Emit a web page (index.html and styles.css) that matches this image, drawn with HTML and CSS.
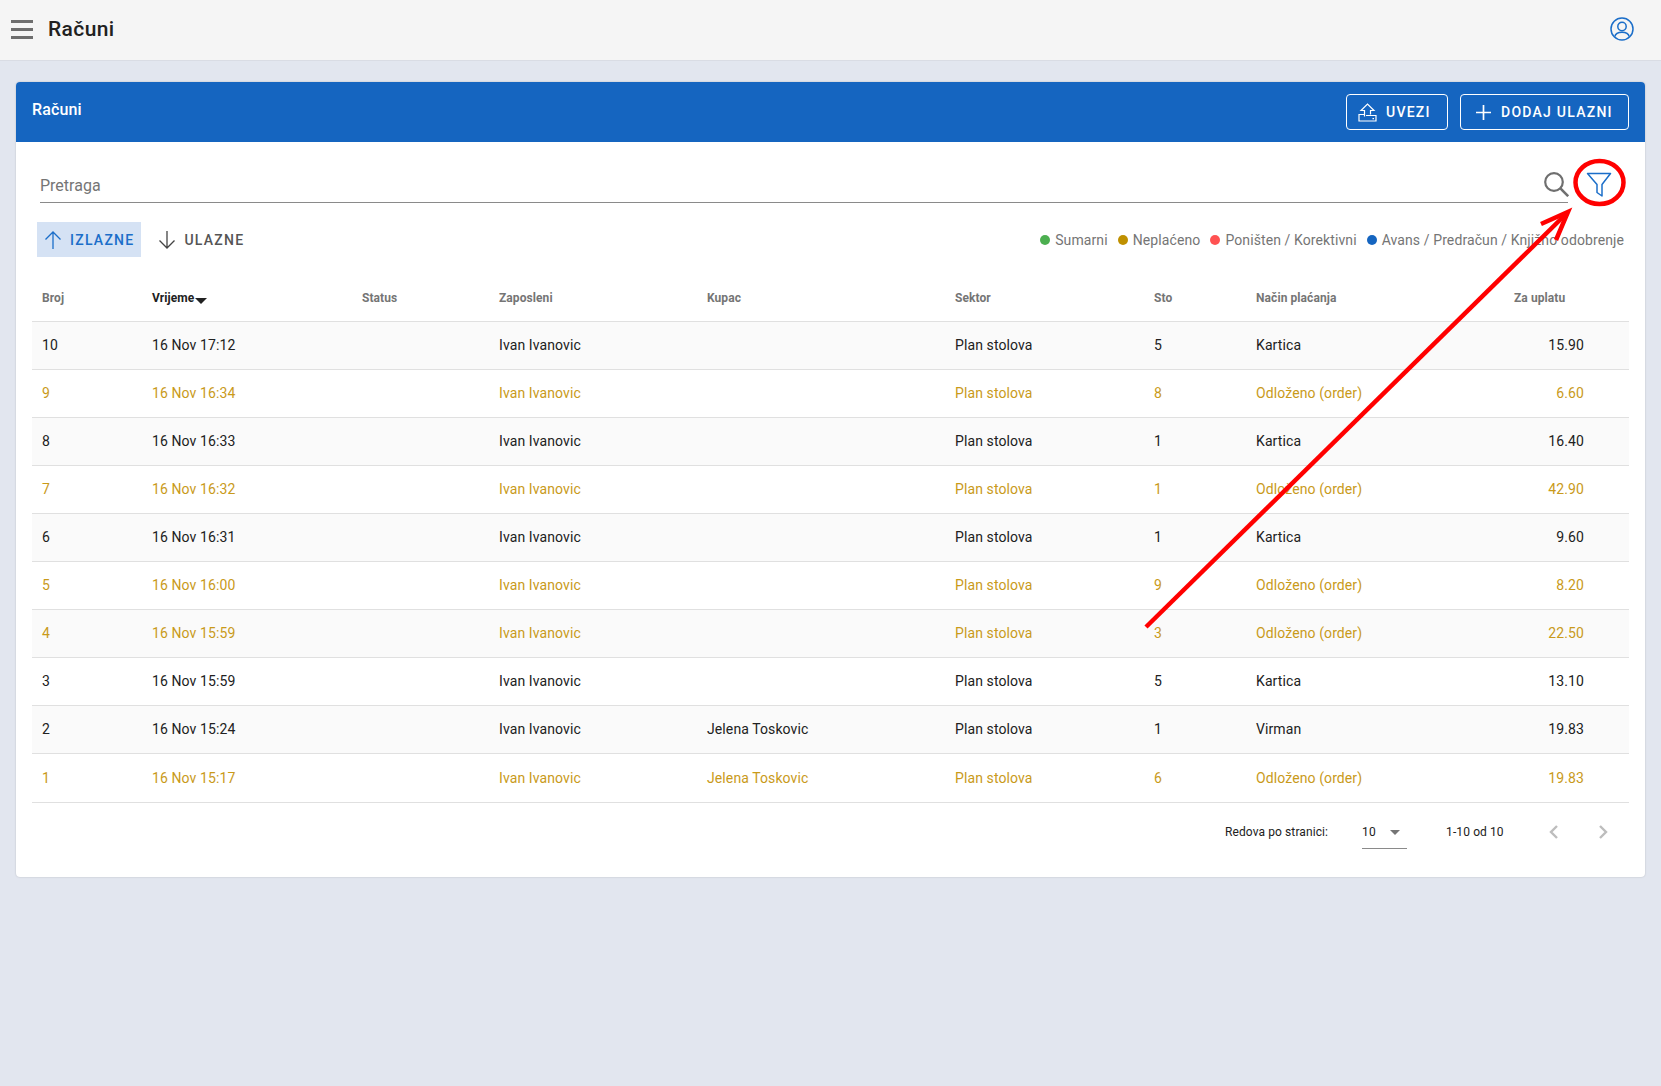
FILE: index.html
```html
<!DOCTYPE html>
<html lang="en">
<head>
    <meta charset="UTF-8">
    <title>Računi</title>
    <link rel="stylesheet" href="styles.css">
</head>
<body>
    <header class="topbar">
        <svg class="menu-icon" width="22" height="19" viewBox="0 0 22 19"><path d="M0 1.500h22M0 9.500h22M0 17.500h22" stroke="#6e6e6e" stroke-width="2.800" fill="none"/></svg>
        <h1 class="topbar-title">Računi</h1>
        <svg class="user-icon" width="24" height="24" viewBox="0 0 24 24" fill="none" stroke="#1b6ec9" stroke-width="1.5"><circle cx="12" cy="12" r="11"/><circle cx="12" cy="9.5" r="4.2"/><path d="M4.8 19.6c.6-3 3.6-4.4 7.2-4.4s6.600 1.400 7.200 4.400"/></svg>
    </header>

    <main class="page">
        <section class="card">
            <div class="card-head">
                <h2 class="card-title">Računi</h2>
                <div class="card-actions">
                    <button class="btn-outline btn-import">
                        <svg width="19" height="19" viewBox="0 0 19 19" fill="none" stroke="#fff" stroke-width="1.200"><path d="M6.500 13.500V7.500H3L9.500 1 16 7.500h-3.500v4"/><path d="M6.500 11.500H1v6.500h17v-5.500H8"/><path d="M14.500 15.700h1.500"/></svg>
                        UVEZI
                    </button>
                    <button class="btn-outline btn-add">
                        <svg width="15" height="15" viewBox="0 0 15 15" fill="none" stroke="#fff" stroke-width="1.700"><path d="M7.500 0v15M0 7.500h15"/></svg>
                        DODAJ ULAZNI
                    </button>
                </div>
            </div>

            <div class="card-body">
                <div class="search-row">
                    <div class="search-field">
                        <span class="search-label">Pretraga</span>
                        <svg width="25" height="25" viewBox="0 0 25 25" fill="none" stroke="#6f6f6f" stroke-width="2.200"><circle cx="10" cy="10" r="8.800"/><path d="M16.400 16.400l7.800 7.800" stroke-width="2.600"/></svg>
                    </div>
                    <svg class="filter-icon" width="26" height="26" viewBox="0 0 26 26" fill="none" stroke="#1b6ec9" stroke-width="1.500"><path d="M1.500 1.500h23L16 12.500v11.500l-5-3.500v-8z" stroke-linejoin="round"/></svg>
                </div>

                <div class="filter-row">
                    <div class="tabs">
                        <button class="tab tab-active">
                            <svg width="18" height="18" viewBox="0 0 18 18" fill="none" stroke="#1b6ec9" stroke-width="1.300"><path d="M9 18V1M1.500 8.500L9 1l7.500 7.500"/></svg>
                            IZLAZNE
                        </button>
                        <button class="tab">
                            <svg width="18" height="18" viewBox="0 0 18 18" fill="none" stroke="#444" stroke-width="1.300"><path d="M9 0v17M1.500 9.500L9 17l7.500-7.500"/></svg>
                            ULAZNE
                        </button>
                    </div>
                    <ul class="legend">
                        <li><span class="dot dot-green"></span>Sumarni</li>
                        <li><span class="dot dot-amber"></span>Neplaćeno</li>
                        <li><span class="dot dot-red"></span>Poništen / Korektivni</li>
                        <li><span class="dot dot-blue"></span>Avans / Predračun / Knjižno odobrenje</li>
                    </ul>
                </div>

                <table class="bills">
                    <colgroup>
                        <col class="c-broj"><col class="c-time"><col class="c-status"><col class="c-emp"><col class="c-buyer"><col class="c-sector"><col class="c-table"><col class="c-pay"><col class="c-sum">
                    </colgroup>
                    <thead>
                        <tr>
                            <th>Broj</th>
                            <th class="sorted">Vrijeme<span class="sort-caret"></span></th>
                            <th>Status</th>
                            <th>Zaposleni</th>
                            <th>Kupac</th>
                            <th>Sektor</th>
                            <th>Sto</th>
                            <th>Način plaćanja</th>
                            <th>Za uplatu</th>
                        </tr>
                    </thead>
                    <tbody>
                        <tr><td>10</td><td>16 Nov 17:12</td><td></td><td>Ivan Ivanovic</td><td></td><td>Plan stolova</td><td>5</td><td>Kartica</td><td class="sum">15.90</td></tr>
                        <tr class="unpaid"><td>9</td><td>16 Nov 16:34</td><td></td><td>Ivan Ivanovic</td><td></td><td>Plan stolova</td><td>8</td><td>Odloženo (order)</td><td class="sum">6.60</td></tr>
                        <tr><td>8</td><td>16 Nov 16:33</td><td></td><td>Ivan Ivanovic</td><td></td><td>Plan stolova</td><td>1</td><td>Kartica</td><td class="sum">16.40</td></tr>
                        <tr class="unpaid"><td>7</td><td>16 Nov 16:32</td><td></td><td>Ivan Ivanovic</td><td></td><td>Plan stolova</td><td>1</td><td>Odloženo (order)</td><td class="sum">42.90</td></tr>
                        <tr><td>6</td><td>16 Nov 16:31</td><td></td><td>Ivan Ivanovic</td><td></td><td>Plan stolova</td><td>1</td><td>Kartica</td><td class="sum">9.60</td></tr>
                        <tr class="unpaid"><td>5</td><td>16 Nov 16:00</td><td></td><td>Ivan Ivanovic</td><td></td><td>Plan stolova</td><td>9</td><td>Odloženo (order)</td><td class="sum">8.20</td></tr>
                        <tr class="unpaid"><td>4</td><td>16 Nov 15:59</td><td></td><td>Ivan Ivanovic</td><td></td><td>Plan stolova</td><td>3</td><td>Odloženo (order)</td><td class="sum">22.50</td></tr>
                        <tr><td>3</td><td>16 Nov 15:59</td><td></td><td>Ivan Ivanovic</td><td></td><td>Plan stolova</td><td>5</td><td>Kartica</td><td class="sum">13.10</td></tr>
                        <tr><td>2</td><td>16 Nov 15:24</td><td></td><td>Ivan Ivanovic</td><td>Jelena Toskovic</td><td>Plan stolova</td><td>1</td><td>Virman</td><td class="sum">19.83</td></tr>
                        <tr class="unpaid"><td>1</td><td>16 Nov 15:17</td><td></td><td>Ivan Ivanovic</td><td>Jelena Toskovic</td><td>Plan stolova</td><td>6</td><td>Odloženo (order)</td><td class="sum">19.83</td></tr>
                    </tbody>
                </table>

                <div class="pager">
                    <span class="pager-label">Redova po stranici:</span>
                    <span class="pager-select">10<span class="pager-caret"></span></span>
                    <span class="pager-count">1-10 od 10</span>
                    <svg class="pager-prev" width="10" height="14" viewBox="0 0 10 14" fill="none" stroke="#bdbdbd" stroke-width="2.400"><path d="M8 1L2 7l6 6"/></svg>
                    <svg class="pager-next" width="10" height="14" viewBox="0 0 10 14" fill="none" stroke="#bdbdbd" stroke-width="2.400"><path d="M2 1l6 6-6 6"/></svg>
                </div>
            </div>
        </section>
    </main>

    <!-- red annotation drawn on top of the screenshot -->
    <svg class="annotation" width="1661" height="1086" viewBox="0 0 1661 1086" fill="none" stroke="#f00" stroke-width="4.500">
        <ellipse cx="1599.500" cy="182.500" rx="24" ry="21.500"/>
        <path d="M1146 627L1566 214"/>
        <path d="M1541 224L1568 212L1556 240"/>
    </svg>
</body>
</html>
```

FILE: styles.css
```css
* {
    box-sizing: border-box;
}
body {
    margin: 0;
    min-height: 1086px;
    background: #e2e6ef;
    font-family: Roboto, "Liberation Sans", sans-serif;
    font-size: 14px;
    color: #212121;
}

/* top bar */
.topbar {
    display: flex;
    align-items: center;
    height: 61px;
    padding: 0 27px 2px 11px;
    background: #f5f5f5;
    border-bottom: 1px solid #d9dce4;
}
.topbar-title {
    margin: 0 0 0 15px;
    font-size: 21px;
    font-weight: 500;
    letter-spacing: 0.4px;
}
.user-icon {
    margin-left: auto;
}

/* card */
.page {
    padding: 21px 16px 0;
}
.card {
    background: #fff;
    border-radius: 4px;
    box-shadow: 0 0 2px rgba(0, 0, 0, 0.2);
    height: 795px;
    overflow: hidden;
}
.card-head {
    display: flex;
    align-items: center;
    justify-content: space-between;
    height: 60px;
    padding: 0 16px;
    background: #1565c0;
}
.card-title {
    margin: 0 0 6px;
    color: #fff;
    font-size: 16px;
    font-weight: 500;
    letter-spacing: 0.15px;
}
.card-actions {
    display: flex;
    gap: 12px;
}
.btn-outline {
    display: flex;
    align-items: center;
    height: 36px;
    padding: 0 0 0 11px;
    background: transparent;
    border: 1px solid #fff;
    border-radius: 4px;
    color: #fff;
    font: 500 14px Roboto, sans-serif;
    letter-spacing: 1.25px;
    white-space: nowrap;
}
.btn-import {
    width: 102px;
    gap: 9px;
}
.btn-add {
    width: 169px;
    gap: 10px;
    padding-left: 15px;
}
.card-body {
    padding: 0 16px;
}

/* search */
.search-row {
    display: flex;
    align-items: flex-start;
    gap: 18px;
    padding: 30px 0 0 8px;
}
.search-field {
    display: flex;
    flex: 1;
    align-items: center;
    justify-content: space-between;
    height: 31px;
    border-bottom: 1px solid #8a8a8a;
}
.search-label {
    font-size: 16px;
    color: #757575;
    margin-bottom: 4px;
}
.search-field svg {
    margin: 0 -1px 5px 0;
}
.filter-icon {
    margin-right: 17px;
}

/* tabs + legend */
.filter-row {
    display: flex;
    align-items: center;
    justify-content: space-between;
    margin-top: 19px;
    padding: 0 5px;
}
.tabs {
    display: flex;
    gap: 10px;
}
.tab {
    display: flex;
    align-items: center;
    gap: 8px;
    height: 35px;
    padding: 0 7px 0 7px;
    background: none;
    border: 0;
    color: #555;
    font: 500 14px Roboto, sans-serif;
    letter-spacing: 1.25px;
}
.tab-active {
    background: #d5e2f4;
    color: #1b6ec9;
}
.legend {
    display: flex;
    gap: 10px;
    margin: 0;
    padding: 0;
    list-style: none;
    color: #757575;
    letter-spacing: 0.1px;
}
.legend li {
    display: flex;
    align-items: center;
    gap: 5px;
}
.dot {
    width: 10px;
    height: 10px;
    border-radius: 50%;
}
.dot-green { background: #4caf50; }
.dot-amber { background: #bf9000; }
.dot-red { background: #ff5252; }
.dot-blue { background: #1565c0; }

/* table */
.bills {
    width: 100%;
    margin-top: 18px;
    border-collapse: collapse;
    table-layout: fixed;
}
.c-broj { width: 110px; }
.c-time { width: 210px; }
.c-status { width: 137px; }
.c-emp { width: 208px; }
.c-buyer { width: 248px; }
.c-sector { width: 199px; }
.c-table { width: 102px; }
.c-pay { width: 258px; }
.c-sum { width: 125px; }
.bills th {
    height: 46px;
    padding: 0 0 0 10px;
    text-align: left;
    font-size: 12px;
    font-weight: 700;
    letter-spacing: 0.08px;
    color: #757575;
    border-bottom: 1px solid #e0e0e0;
}
.bills th.sorted {
    color: #212121;
}
.sort-caret {
    display: inline-block;
    margin-left: 1px;
    border: 6px solid transparent;
    border-top-color: #212121;
    border-bottom: 0;
    vertical-align: -2px;
}
.bills td {
    height: 48px;
    padding: 0 0 0 10px;
    letter-spacing: 0.1px;
    border-bottom: 1px solid #e0e0e0;
}
.bills tbody tr:nth-child(even) {
    background: #fff;
}
.bills tbody tr:nth-child(odd) {
    background: #fafafa;
}
.bills .unpaid td {
    color: #c99a1a;
}
.bills td.sum {
    padding: 0 45px 0 0;
    text-align: right;
}
.bills tr:last-child td {
    height: 49px;
}

/* pager */
.pager {
    display: flex;
    align-items: center;
    height: 58px;
    padding-left: 1193px;
    font-size: 12px;
    letter-spacing: 0.1px;
}
.pager-select {
    display: flex;
    align-items: center;
    justify-content: space-between;
    width: 45px;
    height: 32px;
    margin: 3px 0 0 34px;
    border-bottom: 1px solid #8a8a8a;
    padding: 0 7px 1px 0;
}
.pager-caret {
    border: 5px solid transparent;
    border-top-color: #757575;
    border-bottom: 0;
}
.pager-count {
    margin-left: 39px;
}
.pager-prev {
    margin-left: 45px;
}
.pager-next {
    margin-left: 39px;
}

.annotation {
    position: absolute;
    top: 0;
    left: 0;
    pointer-events: none;
}
```
